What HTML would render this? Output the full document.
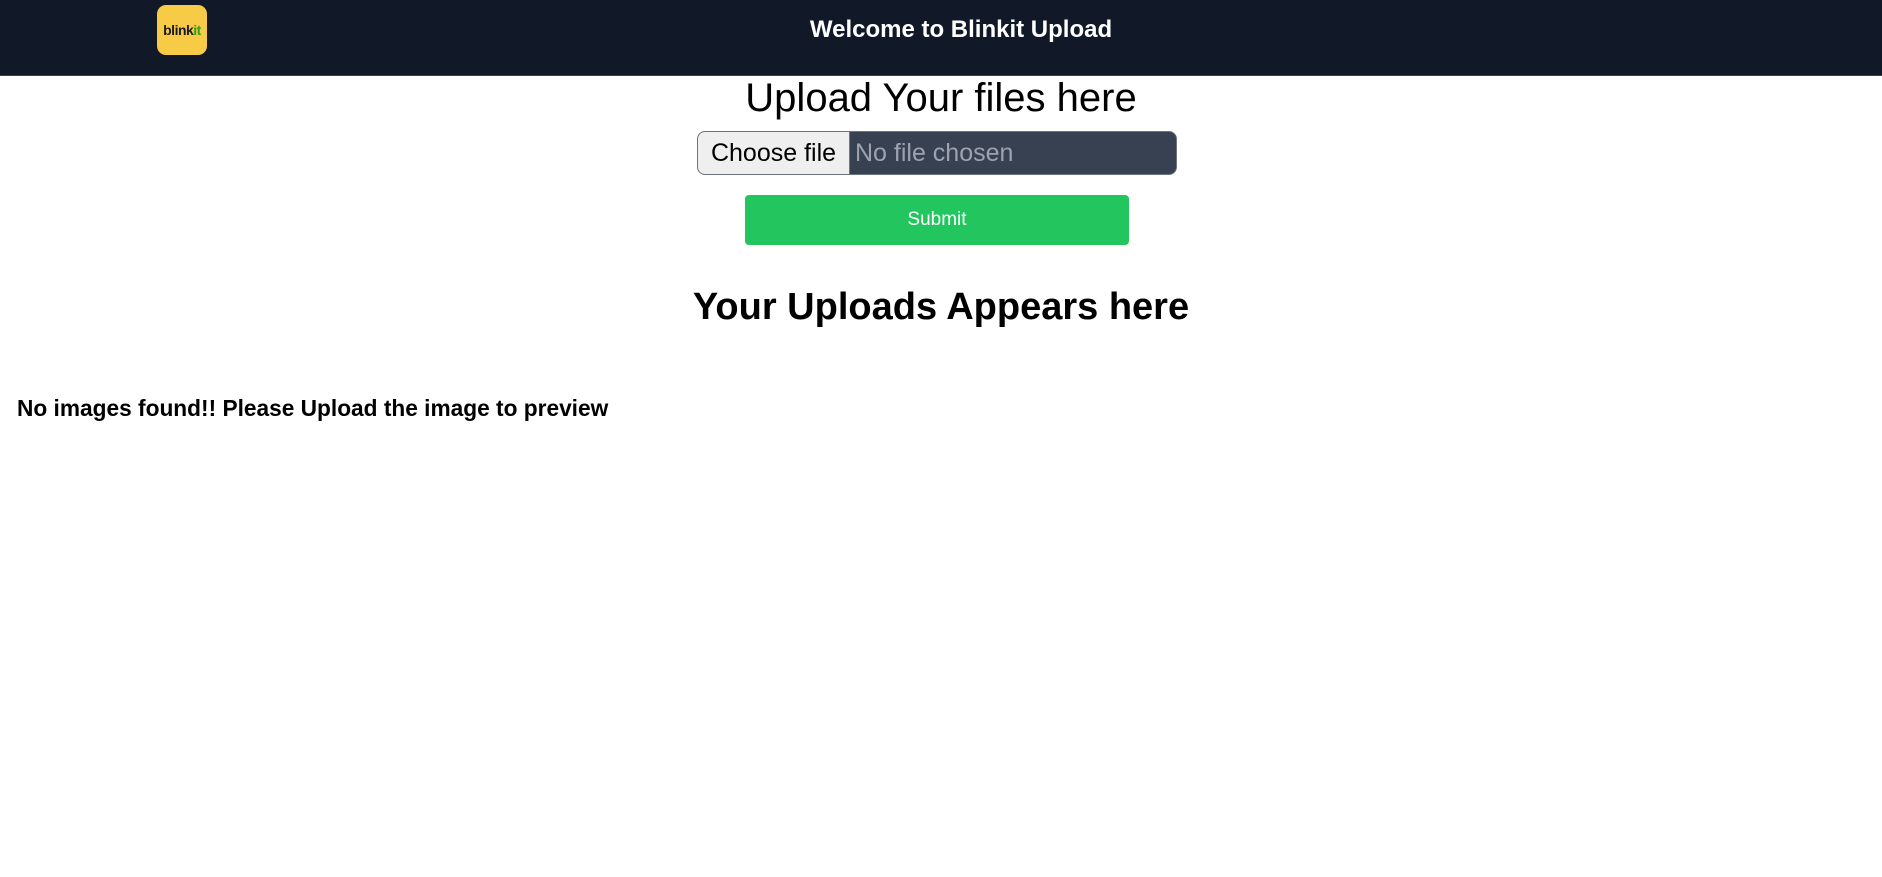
<!DOCTYPE html>
<html><head><style>
body{margin:0;width:1882px;height:877px;background:#fff;font-family:"Liberation Sans",sans-serif;position:relative;overflow:hidden}
.hdr{position:absolute;left:0;top:0;width:1882px;height:75px;background:#111827;border-bottom:1px solid #374151}
.logo{position:absolute;left:157px;top:5px;width:50px;height:50px;border-radius:9px;background:#f8cb46;font-weight:bold;font-size:14px;line-height:50px;text-align:center;color:#1a1a1a;letter-spacing:-0.5px}
.logo span{color:#2d9e1a}
.t{position:absolute;left:0;width:1882px;text-align:center;white-space:nowrap}
.inp{position:absolute;left:697px;top:131px;width:478px;height:42px;border:1px solid #6b7280;border-radius:8px;background:#374151;overflow:hidden}
.btn{position:absolute;left:0;top:0;width:151px;height:42px;background:#efefef;border-right:1px solid #767676;font-size:25px;line-height:42px;text-align:center;color:#000}
.nf{position:absolute;left:157px;top:0;font-size:25px;line-height:42px;color:#9ca3af}
.sub{position:absolute;left:745px;top:195px;width:384px;height:50px;background:#22c55e;border-radius:4px;color:#fff;font-size:19px;line-height:50px;text-align:center}
</style></head><body>
<div class="hdr"><div class="logo">blink<span>it</span></div>
<div class="t" style="top:15px;left:20px;color:#fff;font-size:24px;line-height:30px;font-weight:bold">Welcome to Blinkit Upload</div></div>
<div class="t" style="top:75px;font-size:40px;line-height:46px;color:#000">Upload Your files here</div>
<div class="inp"><div class="btn">Choose file</div><div class="nf">No file chosen</div></div>
<div class="sub">Submit</div>
<div class="t" style="top:285px;font-size:38px;line-height:44px;font-weight:bold;color:#000">Your Uploads Appears here</div>
<div style="position:absolute;left:17px;top:395px;font-size:22.7px;line-height:26px;font-weight:bold;color:#000;white-space:nowrap">No images found!! Please Upload the image to preview</div>
</body></html>
